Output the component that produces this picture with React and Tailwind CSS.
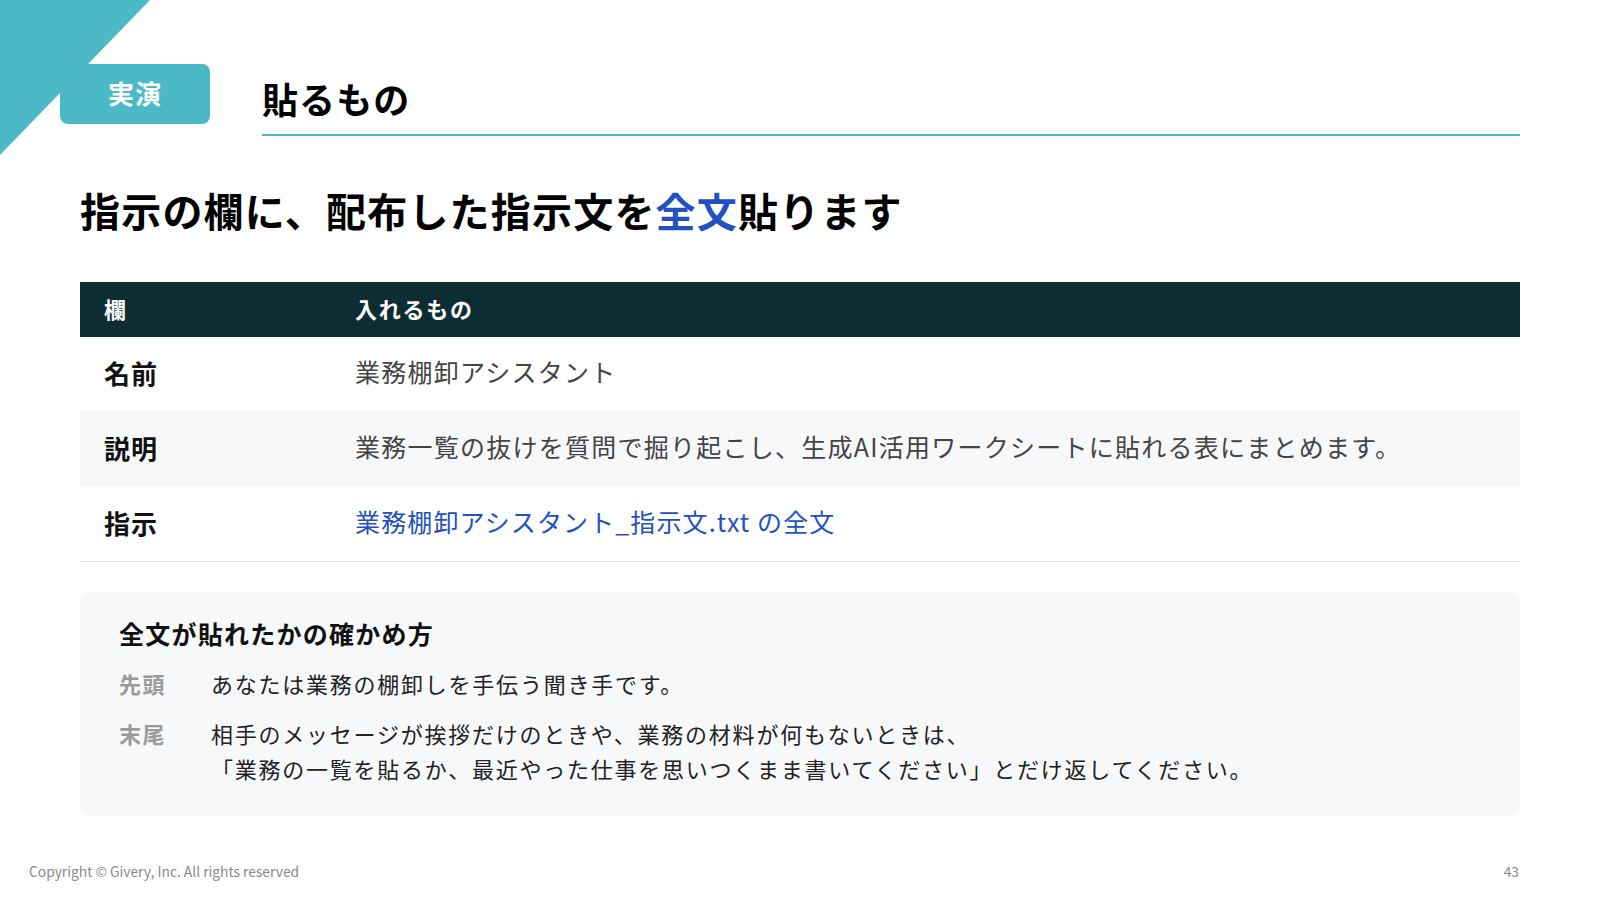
export default function App() {
  const jp = { fontFamily: '"Noto Sans CJK JP", "Noto Sans", sans-serif' };
  return (
    <div className="relative w-[1600px] h-[900px] bg-white overflow-hidden" style={jp}>
      {/* corner triangle */}
      <svg className="absolute left-0 top-0" width="152" height="156" viewBox="0 0 152 156">
        <polygon points="0,0 150,0 0,155" fill="#4bbac6" />
      </svg>

      <div className="flex flex-col h-full">
        {/* header */}
        <div className="relative flex items-start pt-[64px] pl-[60px] pr-[80px]">
          <div className="relative z-10 w-[150px] h-[60px] rounded-[8px] bg-[#4bbac6] flex items-center justify-center pb-[3px] text-white text-[26px] font-bold tracking-[0.04em]">
            実演
          </div>
          <div className="ml-[52px] flex-1 border-b-2 border-[#4bbac6] pt-[11px] pb-[13px]">
            <div className="text-[36px] font-bold leading-[46px] text-black tracking-[0.03em]">貼るもの</div>
          </div>
        </div>

        <div className="px-[80px]">
          <h1 className="mt-[49px] pb-[1px] text-[40px] font-bold leading-[50px] text-black tracking-[0.03em]">
            指示の欄に、配布した指示文を<span className="text-[#2451c0]">全文</span>貼ります
          </h1>

          <div className="mt-[46px]">
            <div className="flex h-[55px] items-center pb-[2px] bg-[#0d2d33] text-white text-[22px] font-bold tracking-[0.08em]">
              <div className="w-[251px] pl-[24px]">欄</div>
              <div className="pl-[24px]">入れるもの</div>
            </div>
            <div className="flex h-[74px] items-center pb-[4px]">
              <div className="w-[251px] pl-[24px] font-bold text-[#111] text-[26px] tracking-[0.04em]">名前</div>
              <div className="pl-[24px] text-[#444] text-[25px] tracking-[0.05em]">業務棚卸アシスタント</div>
            </div>
            <div className="flex h-[76px] items-center pb-[4px] bg-[#f7f8fa]">
              <div className="w-[251px] pl-[24px] font-bold text-[#111] text-[26px] tracking-[0.04em]">説明</div>
              <div className="pl-[24px] text-[#444] text-[25px] tracking-[0.05em]">業務一覧の抜けを質問で掘り起こし、生成AI活用ワークシートに貼れる表にまとめます。</div>
            </div>
            <div className="flex h-[75px] items-center pb-[4px] border-b border-[#e3e5e8]">
              <div className="w-[251px] pl-[24px] font-bold text-[#111] text-[26px] tracking-[0.04em]">指示</div>
              <div className="pl-[24px] text-[#2451c0] text-[25px] tracking-[0.045em]">業務棚卸アシスタント_指示文.txt の全文</div>
            </div>
          </div>

          <div className="mt-[30px] h-[224px] rounded-[12px] bg-[#f7f8fa] px-[39px] pt-[23px]">
            <div className="text-[25px] font-bold leading-[36px] text-[#111] tracking-[0.05em]">全文が貼れたかの確かめ方</div>
            <div className="mt-[15px] flex leading-[35px]">
              <div className="w-[92px] font-bold text-[#9a9a9a] text-[22px] tracking-[0.07em]">先頭</div>
              <div className="text-[#222] text-[22px] tracking-[0.08em]">あなたは業務の棚卸しを手伝う聞き手です。</div>
            </div>
            <div className="mt-[15px] flex leading-[35px]">
              <div className="w-[92px] font-bold text-[#9a9a9a] text-[22px] tracking-[0.07em]">末尾</div>
              <div className="text-[#222] text-[22px] tracking-[0.08em]">
                <div>相手のメッセージが挨拶だけのときや、業務の材料が何もないときは、</div>
                <div>「業務の一覧を貼るか、最近やった仕事を思いつくまま書いてください」とだけ返してください。</div>
              </div>
            </div>
          </div>
        </div>

        <div className="mt-auto mb-[19px] flex items-center justify-between pl-[29px] pr-[81px] text-[13.8px] leading-[20px] text-[#8a8a8a]">
          <div>Copyright © Givery, Inc. All rights reserved</div>
          <div>43</div>
        </div>
      </div>
    </div>
  );
}
